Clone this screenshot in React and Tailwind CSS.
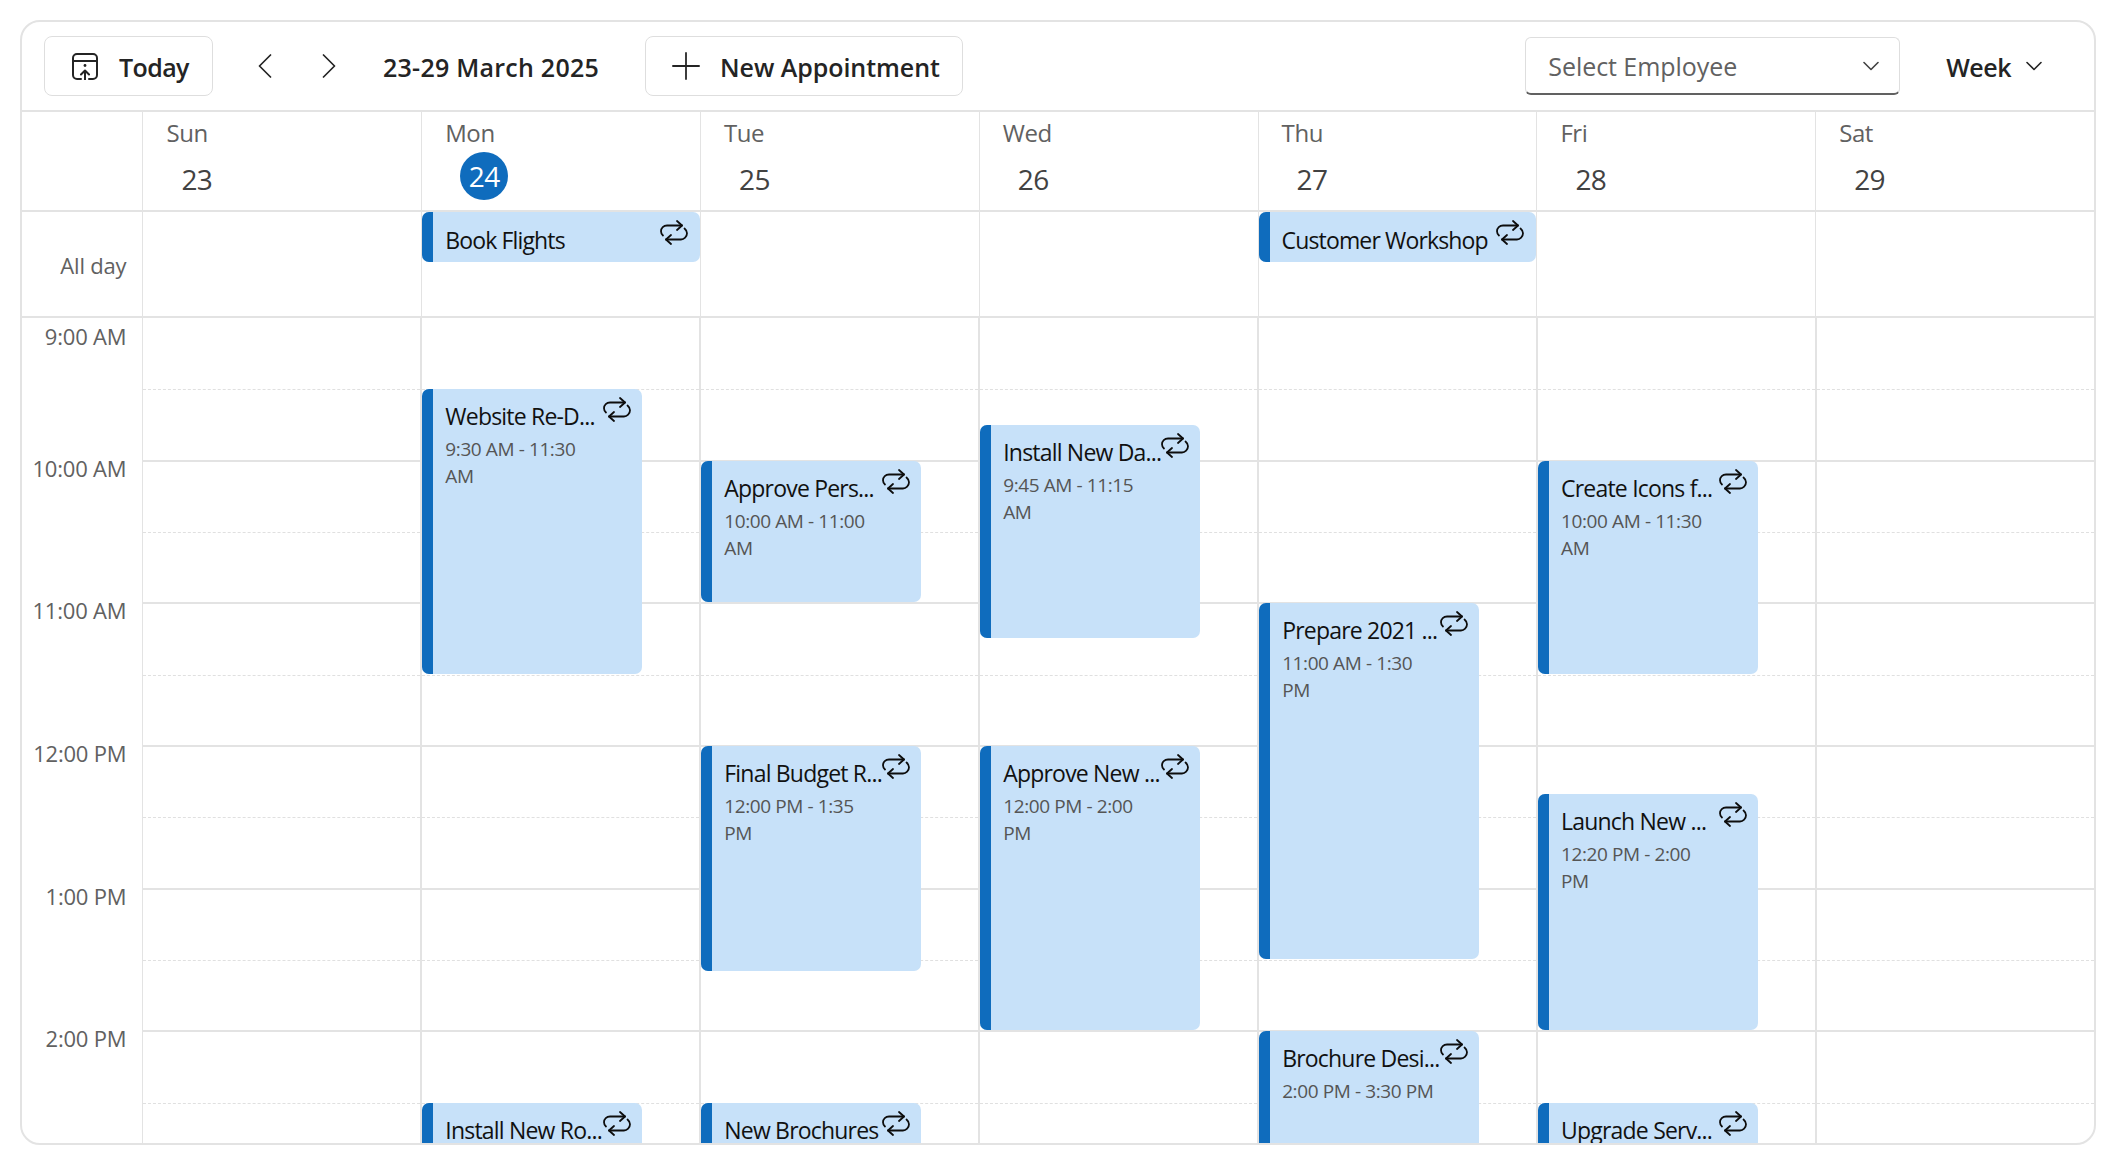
const FONT = "font-['Open_Sans','Noto_Sans',sans-serif]";

function Repeat({ className = "" }) {
  return (
    <svg viewBox="0 0 28 25" className={`w-[28px] h-[25px] ${className}`} fill="none" stroke="#0d0d0d" strokeWidth="1.8" strokeLinecap="round" strokeLinejoin="round">
      <path d="M3 15.5C1.8 14.5 1 13 1 11.3C1 8 3.7 5.5 7 5.5H22" />
      <path d="M17 1L22 5.5L17 10" />
      <path d="M24.5 8.5C26 9.7 27 11.2 27 13.3C27 16.8 24 19.5 21 19.5H6" />
      <path d="M11 15L6 19.5L11 24" />
    </svg>
  );
}

function TodayIcon() {
  return (
    <svg viewBox="0 0 26 27" className="w-[26px] h-[27px]" fill="none" stroke="#242424" strokeWidth="2" strokeLinecap="round" strokeLinejoin="round">
      <path d="M9 26H5C2.8 26 1 24.2 1 22V5C1 2.8 2.8 1 5 1H21C23.2 1 25 2.8 25 5V22C25 24.2 23.2 26 21 26H17" />
      <path d="M1 8H25" />
      <circle cx="13" cy="12.5" r="1.4" fill="#242424" stroke="none" />
      <path d="M13 27V18M9 21.5L13 17.5L17 21.5" />
    </svg>
  );
}

function Chevron({ dir }) {
  return (
    <svg viewBox="0 0 14 24" className="w-[14px] h-[24px]" fill="none" stroke="#242424" strokeWidth="1.7" strokeLinecap="round" strokeLinejoin="round">
      <path d={dir === "left" ? "M12.5 1L1.5 12L12.5 23" : "M1.5 1L12.5 12L1.5 23"} />
    </svg>
  );
}

function Down({ color = "#424242" }) {
  return (
    <svg viewBox="0 0 16 10" className="w-[16px] h-[10px]" fill="none" stroke={color} strokeWidth="1.6" strokeLinecap="round" strokeLinejoin="round">
      <path d="M1 1.5L8 8.5L15 1.5" />
    </svg>
  );
}

const HOUR = 142.67;
const days = [
  { name: "Sun", num: "23" },
  { name: "Mon", num: "24", today: true, allDay: "Book Flights" },
  { name: "Tue", num: "25" },
  { name: "Wed", num: "26" },
  { name: "Thu", num: "27", allDay: "Customer Workshop" },
  { name: "Fri", num: "28" },
  { name: "Sat", num: "29" },
];

const events = {
  Mon: [
    { t: "Website Re-D...", a: "9:30 AM - 11:30", b: "AM", s: 30, e: 150 },
    { t: "Install New Ro...", s: 330, e: 420 },
  ],
  Tue: [
    { t: "Approve Pers...", a: "10:00 AM - 11:00", b: "AM", s: 60, e: 120 },
    { t: "Final Budget R...", a: "12:00 PM - 1:35", b: "PM", s: 180, e: 275 },
    { t: "New Brochures", s: 330, e: 420 },
  ],
  Wed: [
    { t: "Install New Da...", a: "9:45 AM - 11:15", b: "AM", s: 45, e: 135 },
    { t: "Approve New ...", a: "12:00 PM - 2:00", b: "PM", s: 180, e: 300 },
  ],
  Thu: [
    { t: "Prepare 2021 ...", a: "11:00 AM - 1:30", b: "PM", s: 120, e: 270 },
    { t: "Brochure Desi...", a: "2:00 PM - 3:30 PM", s: 300, e: 390 },
  ],
  Fri: [
    { t: "Create Icons f...", a: "10:00 AM - 11:30", b: "AM", s: 60, e: 150 },
    { t: "Launch New ...", a: "12:20 PM - 2:00", b: "PM", s: 200, e: 300 },
    { t: "Upgrade Serv...", s: 330, e: 420 },
  ],
};

const hours = ["9:00 AM", "10:00 AM", "11:00 AM", "12:00 PM", "1:00 PM", "2:00 PM"];

function Event({ ev }) {
  return (
    <div
      className="absolute left-0 w-[220px] rounded-[7px] overflow-hidden bg-[#c7e1f9] flex"
      style={{ top: (ev.s / 60) * HOUR, height: ((ev.e - ev.s) / 60) * HOUR - 1 }}
    >
      <div className="w-[11px] shrink-0 bg-[#0f6cbd]" />
      <div className="relative flex-1 pl-[12px] pt-[12px]">
        <div className="text-[23px] leading-[30px] tracking-[-0.8px] text-[#111] whitespace-nowrap">{ev.t}</div>
        {ev.a && <div className="mt-[5px] text-[19px] leading-[27px] tracking-[-0.4px] text-[#555] whitespace-nowrap">{ev.a}</div>}
        {ev.b && <div className="text-[19px] leading-[27px] tracking-[-0.4px] text-[#555]">{ev.b}</div>}
        <Repeat className="absolute top-[8px] right-[11px]" />
      </div>
    </div>
  );
}

export default function App() {
  return (
    <div className={`h-screen bg-white pl-[20px] pr-[24px] pt-[20px] pb-[25px] ${FONT}`}>
      <div className="h-full flex flex-col overflow-hidden rounded-[20px] border-2 border-[#e3e3e3] bg-white">
        <div className="h-[90px] shrink-0 border-b-2 border-[#e3e3e3] flex items-center pl-[22px] pr-[52px]">
          <button className="h-[60px] w-[169px] rounded-[8px] border border-[#dedede] flex items-center pl-[27px] gap-[21px]">
            <TodayIcon />
            <span className="pt-[3px] text-[25px] font-semibold tracking-[-0.6px] text-[#242424]">Today</span>
          </button>
          <button className="ml-[45px]"><Chevron dir="left" /></button>
          <button className="ml-[50px]"><Chevron dir="right" /></button>
          <span className="ml-[47px] pt-[3px] text-[25px] font-semibold tracking-[0.25px] text-[#242424] whitespace-nowrap">23-29 March 2025</span>
          <button className="ml-[46px] h-[60px] w-[318px] rounded-[8px] border border-[#dedede] flex items-center pl-[26px] gap-[20px]">
            <svg viewBox="0 0 30 30" className="w-[28px] h-[28px]" fill="none" stroke="#242424" strokeWidth="1.9" strokeLinecap="round">
              <path d="M15 1V29M1 15H29" />
            </svg>
            <span className="pt-[3px] text-[25px] font-semibold tracking-[-0.05px] text-[#242424] whitespace-nowrap">New Appointment</span>
          </button>
          <div className="ml-auto h-[58px] w-[375px] rounded-[6px] border border-[#dedede] border-b-2 border-b-[#616161] flex items-center justify-between pl-[22px] pr-[20px]">
            <span className="pt-[3px] text-[25px] tracking-[-0.05px] text-[#616161]">Select Employee</span>
            <Down />
          </div>
          <span className="ml-[46px] pt-[3px] text-[25px] font-semibold tracking-[-0.5px] text-[#242424]">Week</span>
          <span className="ml-[15px]"><Down color="#242424" /></span>
        </div>

        <div className="h-[100px] shrink-0 border-b-2 border-[#e3e3e3] flex">
          <div className="w-[120.4px] shrink-0" />
          {days.map((d) => (
            <div key={d.name} className="flex-1 border-l border-[#e3e3e3] pl-[23px] pt-[3px]">
              <div className="text-[24px] leading-[36px] tracking-[-0.4px] text-[#616161]">{d.name}</div>
              {d.today ? (
                <div className="ml-[15px] mt-[1px] w-[48px] h-[48px] rounded-full bg-[#0f6cbd] text-white text-[28px] tracking-[-0.6px] flex items-center justify-center">{d.num}</div>
              ) : (
                <div className="ml-[15px] mt-[8px] text-[28px] leading-[40px] tracking-[-0.6px] text-[#424242]">{d.num}</div>
              )}
            </div>
          ))}
        </div>

        <div className="h-[106px] shrink-0 border-b-2 border-[#e3e3e3] flex">
          <div className="w-[120.4px] shrink-0 pr-[16px] pt-[38px] text-right text-[22px] leading-[30px] tracking-[-0.2px] text-[#616161]">All day</div>
          {days.map((d) => (
            <div key={d.name} className="flex-1 border-l border-[#e3e3e3]">
              {d.allDay && (
                <div className="relative h-[50px] rounded-[7px] overflow-hidden bg-[#c7e1f9] flex">
                  <div className="w-[11px] shrink-0 bg-[#0f6cbd]" />
                  <div className="pl-[12px] pt-[13px] text-[23px] leading-[30px] tracking-[-0.85px] text-[#111] whitespace-nowrap">{d.allDay}</div>
                  <Repeat className="absolute top-[8px] right-[12px]" />
                </div>
              )}
            </div>
          ))}
        </div>

        <div className="flex-1 min-h-0 overflow-hidden flex">
          <div className="w-[120.4px] shrink-0 pr-[16px] text-right text-[22px] leading-[30px] tracking-[-0.2px] text-[#616161]">
            {hours.map((h, i) => (
              <div key={h} className="h-[142.67px]">
                <div className={i === 0 ? "pt-[3px]" : "-translate-y-[8px]"}>{h}</div>
              </div>
            ))}
          </div>
          {days.map((d) => (
            <div key={d.name} className={`relative flex-1 pt-[1px] ${d.name === "Sun" ? "border-l border-[#e3e3e3]" : "border-l-2 border-[#e3e3e3]"}`}>
              {Array.from({ length: 12 }).map((_, i) => (
                <div key={i} className={`h-[71.33px] ${i % 2 === 0 ? "border-b border-dashed border-[#e0e0e0]" : "border-b-2 border-[#e3e3e3]"}`} />
              ))}
              {(events[d.name] || []).map((ev) => <Event key={ev.t} ev={ev} />)}
            </div>
          ))}
        </div>
      </div>
    </div>
  );
}
